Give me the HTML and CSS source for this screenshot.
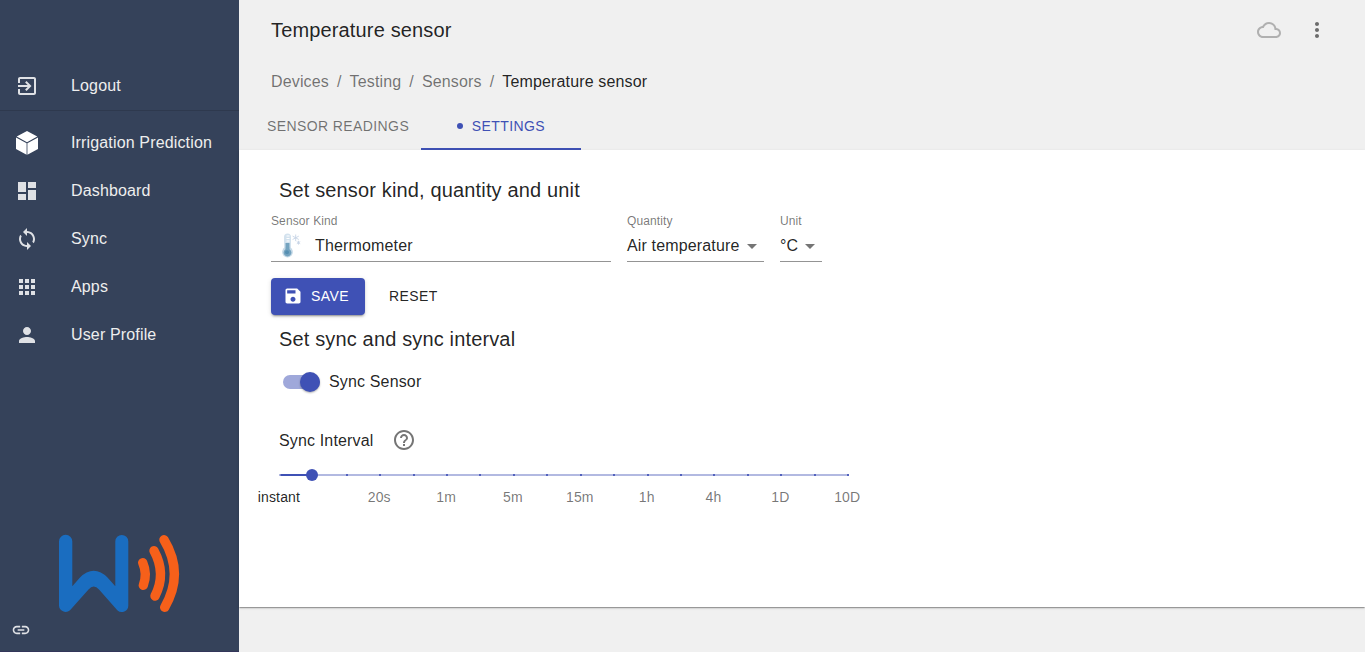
FILE: index.html
```html
<!DOCTYPE html>
<html lang="en">
<head>
<meta charset="utf-8">
<title>Temperature sensor</title>
<link rel="stylesheet" href="styles.css">
</head>
<body>
<div class="app">
  <aside class="sidebar">
    <nav class="nav nav-top">
      <a class="nav-item"><svg class="icon" viewBox="0 0 24 24"><path d="M10.09 15.59L11.5 17l5-5-5-5-1.41 1.41L12.67 11H3v2h9.67l-2.58 2.59zM19 3H5c-1.11 0-2 .9-2 2v4h2V5h14v14H5v-4H3v4c0 1.1.89 2 2 2h14c1.1 0 2-.9 2-2V5c0-1.1-.9-2-2-2z"/></svg><span>Logout</span></a>
    </nav>
    <nav class="nav nav-main">
      <a class="nav-item"><svg class="icon icon-cube" viewBox="0 0 24 24"><path d="M12 0l10.300 5.500L12 11.200 1.700 5.500zM1 6.500l10.600 5.800v11.500L1 18zM23 6.500l-10.600 5.800v11.500L23 18z"/></svg><span>Irrigation Prediction</span></a>
      <a class="nav-item"><svg class="icon" viewBox="0 0 24 24"><path d="M3 13h8V3H3v10zm0 8h8v-6H3v6zm10 0h8V11h-8v10zm0-18v6h8V3h-8z"/></svg><span>Dashboard</span></a>
      <a class="nav-item"><svg class="icon" viewBox="0 0 24 24"><path d="M12 4V1L8 5l4 4V6c3.31 0 6 2.69 6 6 0 1.01-.25 1.97-.7 2.8l1.46 1.46C19.54 15.03 20 13.57 20 12c0-4.42-3.58-8-8-8zm0 14c-3.31 0-6-2.69-6-6 0-1.01.25-1.97.7-2.8L5.24 7.74C4.46 8.97 4 10.43 4 12c0 4.42 3.58 8 8 8v3l4-4-4-4v3z"/></svg><span>Sync</span></a>
      <a class="nav-item"><svg class="icon" viewBox="0 0 24 24"><path d="M4 8h4V4H4v4zm6 12h4v-4h-4v4zm-6 0h4v-4H4v4zm0-6h4v-4H4v4zm6 0h4v-4h-4v4zm6-10v4h4V4h-4zm-6 4h4V4h-4v4zm6 6h4v-4h-4v4zm0 6h4v-4h-4v4z"/></svg><span>Apps</span></a>
      <a class="nav-item"><svg class="icon" viewBox="0 0 24 24"><path d="M12 12c2.21 0 4-1.79 4-4s-1.79-4-4-4-4 1.79-4 4 1.79 4 4 4zm0 2c-2.67 0-8 1.34-8 4v2h16v-2c0-2.66-5.33-4-8-4z"/></svg><span>User Profile</span></a>
    </nav>
    <svg class="logo" viewBox="0 0 122 80" fill="none" stroke-linecap="round">
      <path fill="#1a6dc0" d="M1 8.400a6.650 6.650 0 0 1 13.300 0V53.300L22 44.500Q28.500 37.700 35.700 37.700T49.500 44.500L57.300 53.300V8.400a6.500 6.500 0 0 1 13 0V72.500a6.500 6.500 0 0 1-11 4.700L41 56.500Q35.700 50.500 30.500 56.500L12 77.200A6.600 6.600 0 0 1 1 72.500z"/>
      <g stroke="#f6601a" stroke-width="9.400">
        <path d="M84.700 29.700Q89.600 41 85.300 52.300"/>
        <path d="M96 17.700Q108.500 40.500 97 63"/>
        <path d="M106 6.700Q126.400 40.500 106.700 74.300"/>
      </g>
    </svg>
    <svg class="link-icon" viewBox="0 0 24 24"><path d="M3.9 12c0-1.71 1.39-3.1 3.1-3.1h4V7H7c-2.76 0-5 2.24-5 5s2.24 5 5 5h4v-1.900H7c-1.710 0-3.100-1.390-3.100-3.100zM8 13h8v-2H8v2zm9-6h-4v1.900h4c1.710 0 3.100 1.390 3.100 3.100s-1.390 3.100-3.100 3.100h-4V17h4c2.760 0 5-2.240 5-5s-2.240-5-5-5z"/></svg>
  </aside>

  <main class="main">
    <header class="toolbar">
      <h1 class="title">Temperature sensor</h1>
      <svg class="icon cloud" viewBox="0 0 24 24"><path d="M19.35 10.04C18.67 6.59 15.64 4 12 4 9.110 4 6.600 5.640 5.350 8.040 2.340 8.360 0 10.910 0 14c0 3.310 2.690 6 6 6h13c2.760 0 5-2.240 5-5 0-2.640-2.050-4.780-4.650-4.960zM19 18H6c-2.210 0-4-1.790-4-4s1.790-4 4-4h.71C7.370 7.690 9.480 6 12 6c3.040 0 5.500 2.460 5.500 5.500v.5H19c1.660 0 3 1.340 3 3s-1.340 3-3 3z"/></svg>
      <svg class="icon more" viewBox="0 0 24 24"><path d="M12 8c1.100 0 2-.9 2-2s-.9-2-2-2-2 .9-2 2 .9 2 2 2zm0 2c-1.100 0-2 .9-2 2s.9 2 2 2 2-.9 2-2-.9-2-2-2zm0 6c-1.100 0-2 .9-2 2s.9 2 2 2 2-.9 2-2-.9-2-2-2z"/></svg>
    </header>
    <div class="breadcrumbs">
      <span>Devices</span><span class="sep">/</span><span>Testing</span><span class="sep">/</span><span>Sensors</span><span class="sep">/</span><span class="current">Temperature sensor</span>
    </div>
    <div class="tabs">
      <div class="tab">SENSOR READINGS</div>
      <div class="tab active"><i class="dot"></i>SETTINGS</div>
    </div>
    <section class="paper">
      <h2 class="section-title">Set sensor kind, quantity and unit</h2>
      <div class="fields">
        <div class="field kind">
          <label class="label">Sensor Kind</label>
          <div class="value">
            <svg class="thermo" viewBox="0 0 24 26">
              <rect x="5" y="1.500" width="7" height="20" rx="3.500" fill="#d3e2ee"/>
              <circle cx="8.500" cy="20" r="5.400" fill="#c5d9e7"/>
              <path d="M7.500 4h3M7.500 6.500h3M7.500 9h3" stroke="#fff" stroke-width="1.200"/>
              <path d="M6.500 11h4v6.200a3.900 3.900 0 1 1-4 0z" fill="#74a3bf"/>
              <circle cx="8" cy="20.300" r="2" fill="#558fb2"/>
              <path d="M16.700 2.500v6.600M13.600 4.100l6.200 3.400M19.800 4.100l-6.200 3.400M19.500 8.800v3.800M17.800 9.700l3.400 2M21.200 9.700l-3.400 2" stroke="#c6d4e5" stroke-width=".9"/>
            </svg>
            <span>Thermometer</span>
          </div>
        </div>
        <div class="field quantity">
          <label class="label">Quantity</label>
          <div class="value"><span>Air temperature</span><svg class="icon arrow" viewBox="0 0 24 24"><path d="M7 10l5 5 5-5z"/></svg></div>
        </div>
        <div class="field unit">
          <label class="label">Unit</label>
          <div class="value"><span>°C</span><svg class="icon arrow" viewBox="0 0 24 24"><path d="M7 10l5 5 5-5z"/></svg></div>
        </div>
      </div>
      <div class="actions">
        <button class="button primary"><svg class="save-icon" viewBox="0 0 24 24"><path d="M17 3H5c-1.110 0-2 .9-2 2v14c0 1.100.89 2 2 2h14c1.100 0 2-.9 2-2V7l-4-4zm-5 16c-1.660 0-3-1.340-3-3s1.340-3 3-3 3 1.340 3 3-1.340 3-3 3zm3-10H5V5h10v4z"/></svg>SAVE</button>
        <button class="button">RESET</button>
      </div>
      <h2 class="section-title sync-title">Set sync and sync interval</h2>
      <div class="switch-row"><span class="switch"><span class="thumb"></span></span><span>Sync Sensor</span></div>
      <div class="interval-row"><span>Sync Interval</span><svg class="icon help" viewBox="0 0 24 24"><path d="M11 18h2v-2h-2v2zm1-16C6.480 2 2 6.480 2 12s4.480 10 10 10 10-4.480 10-10S17.520 2 12 2zm0 18c-4.410 0-8-3.590-8-8s3.590-8 8-8 8 3.590 8 8-3.590 8-8 8zm0-14c-2.210 0-4 1.790-4 4h2c0-1.100.9-2 2-2s2 .9 2 2c0 2-3 1.750-3 5h2c0-2.250 3-2.500 3-5 0-2.210-1.790-4-4-4z"/></svg></div>
      <svg class="slider" viewBox="0 0 570 12">
        <rect class="rail" x="0" y="5" width="569" height="2"/>
        <rect class="track" x="1.500" y="5" width="32" height="2"/>
        <path class="ticks" d="M67 5h2v2h-2zM100 5h2v2h-2zM134 5h2v2h-2zM167 5h2v2h-2zM200 5h2v2h-2zM234 5h2v2h-2zM267 5h2v2h-2zM301 5h2v2h-2zM334 5h2v2h-2zM368 5h2v2h-2zM401 5h2v2h-2zM434 5h2v2h-2zM468 5h2v2h-2zM501 5h2v2h-2zM535 5h2v2h-2zM568 5h2v2h-2z"/>
        <circle class="handle" cx="33" cy="6" r="6"/>
      </svg>
      <div class="marks">
        <span class="on">instant</span><span class="first">20s</span><span>1m</span><span>5m</span><span>15m</span><span>1h</span><span>4h</span><span>1D</span><span>10D</span>
      </div>
    </section>
  </main>
</div>
</body>
</html>
```
FILE: styles.css
```css
* { box-sizing: border-box; }
body {
  margin: 0;
  font: 16px/24px "Liberation Sans", Arial, sans-serif;
  letter-spacing: 0.00938em;
  color: rgba(0, 0, 0, 0.87);
  background: #f0f0f0;
}
h1, h2 { margin: 0; font-size: 20px; line-height: 32px; font-weight: 400; letter-spacing: 0.0075em; }
svg { display: block; flex: none; }
.icon { width: 24px; height: 24px; fill: currentColor; }
.app { display: flex; height: 652px; overflow: hidden; }

.sidebar {
  width: 239px;
  flex: none;
  display: flex;
  flex-direction: column;
  padding-top: 62px;
  background: #35425a;
  border-bottom: 1px solid #33365a;
  color: #eeeeee;
}
.nav-top { border-bottom: 1px solid #2e394e; }
.nav-main { padding-top: 8px; }
.nav-item { display: flex; align-items: center; height: 48px; padding-left: 15px; gap: 32px; }
.nav-item span { padding-bottom: 1px; }
.nav-item .icon { color: #dfe1e5; }
.nav-item .icon-cube { color: #fff; }
.logo { width: 122px; height: 80px; margin: 174px 0 0 58px; }
.link-icon { width: 20px; height: 20px; margin: 7px 0 0 11px; fill: #dfe1e5; }

.main { flex: 1; min-width: 0; display: flex; flex-direction: column; }
.toolbar { display: flex; align-items: center; height: 60px; padding: 0 36px 0 32px; }
.title { flex: 1; }
.cloud { color: #b0b0b0; }
.more { color: #6c6c6c; margin-left: 24px; }
.breadcrumbs { display: flex; height: 24px; margin-top: 10px; padding-left: 32px; color: rgba(0, 0, 0, 0.54); }
.sep { margin: 0 8px; }
.current { color: rgba(0, 0, 0, 0.87); }
.tabs { display: flex; height: 56px; padding: 8px 0 0 16px; }
.tab {
  display: flex;
  align-items: center;
  justify-content: center;
  height: 48px;
  padding: 0 12px;
  font-size: 14px;
  letter-spacing: 0.02857em;
  color: rgba(0, 0, 0, 0.54);
}
.tab.active { width: 160px; padding-top: 2px; border-bottom: 2px solid #3f51b5; color: #3f51b5; }
.dot { width: 6px; height: 6px; margin-right: 8.5px; border-radius: 50%; background: #3f51b5; }

.paper {
  height: 457px;
  padding: 24px 32px;
  background: #fff;
  box-shadow: 0 2px 1px -1px rgba(0, 0, 0, 0.2), 0 1px 1px rgba(0, 0, 0, 0.14), 0 1px 3px rgba(0, 0, 0, 0.12);
}
.section-title { padding-left: 8px; }
.fields { display: flex; gap: 16px; margin-top: 8px; }
.field { height: 48px; border-bottom: 1px solid #949494; }
.kind { width: 340px; }
.quantity { width: 137px; }
.unit { width: 42px; }
.label {
  display: block;
  width: 100px;
  height: 14px;
  font-size: 16px;
  line-height: 19px;
  transform: scale(0.75);
  transform-origin: 0 0;
  white-space: nowrap;
  color: rgba(0, 0, 0, 0.54);
}
.value { display: flex; align-items: center; height: 34px; }
.value span { padding-top: 2px; }
.quantity .value, .unit .value { justify-content: space-between; }
.thermo { width: 24px; height: 26px; margin: 0 12px 0 8px; }
.arrow { color: #757575; margin-top: 2px; }

.actions { display: flex; gap: 8px; margin-top: 16px; }
.button {
  display: flex;
  align-items: center;
  height: 36px;
  padding: 0 16px;
  border: 0;
  border-radius: 4px;
  background: none;
  font: 14px/24px "Liberation Sans", Arial, sans-serif;
  letter-spacing: 0.02857em;
  color: rgba(0, 0, 0, 0.87);
}
.primary {
  width: 94px;
  height: 37px;
  padding: 0 0 1px 12px;
  background: #3f51b5;
  color: #fff;
  box-shadow: 0 3px 1px -2px rgba(0, 0, 0, 0.2), 0 2px 2px rgba(0, 0, 0, 0.14), 0 1px 5px rgba(0, 0, 0, 0.12);
}
.save-icon { width: 20px; height: 20px; margin-right: 8px; fill: #fff; }
.sync-title { margin-top: 8px; }
.switch-row { display: flex; align-items: center; height: 38px; margin-top: 8px; padding-left: 12px; gap: 9px; }
.switch { display: flex; align-items: center; justify-content: flex-end; width: 37px; height: 14px; border-radius: 7px; background: #9fa8da; }
.thumb { width: 20px; height: 20px; flex: none; border-radius: 50%; background: #3f51b5; box-shadow: 0 1px 2px rgba(0, 0, 0, 0.3); }
.interval-row { display: flex; align-items: center; height: 24px; margin-top: 27px; padding-left: 8px; gap: 19px; }
.interval-row span { padding-top: 2px; }
.help { color: #757575; }
.slider { width: 570px; height: 12px; margin: 17px 0 0 8px; }
.rail { fill: #b2b9e1; }
.track, .handle { fill: #3f51b5; }
.ticks { fill: #5362bd; }
.marks {
  display: flex;
  height: 20px;
  margin: 6px 0 0 -25.5px;
  font-size: 14px;
  line-height: 20px;
  letter-spacing: 0.01071em;
  color: rgba(0, 0, 0, 0.54);
}
.marks span { width: 66.87px; text-align: center; flex: none; }
.marks .first { margin-left: 33.45px; }
.marks .on { color: rgba(0, 0, 0, 0.87); }
```
